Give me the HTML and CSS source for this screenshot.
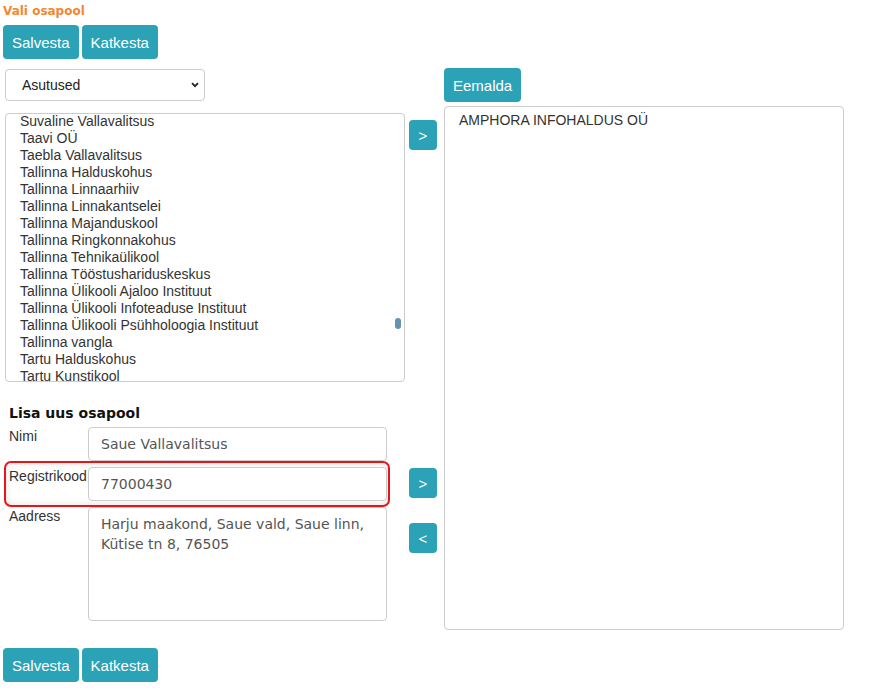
FILE: index.html
```html
<!DOCTYPE html>
<html lang="et">
<head>
<meta charset="utf-8">
<title>Vali osapool</title>
<link rel="stylesheet" href="styles.css">
</head>
<body>
<div class="page">
  <div class="title">Vali osapool</div>
  <div class="toolbar">
    <button class="btn">Salvesta</button>
    <button class="btn">Katkesta</button>
  </div>

  <div class="main">
    <div class="left">
      <div class="select">
        <span>Asutused</span>
        <svg class="chev" width="8" height="6" viewBox="0 0 8 6"><path d="M1 1.2 L4 4.2 L7 1.2" fill="none" stroke="#222" stroke-width="1.8"/></svg>
      </div>
      <div class="listbox">
        <div class="items">
          <div class="item">Suvaline Vallavalitsus</div>
          <div class="item">Taavi OÜ</div>
          <div class="item">Taebla Vallavalitsus</div>
          <div class="item">Tallinna Halduskohus</div>
          <div class="item">Tallinna Linnaarhiiv</div>
          <div class="item">Tallinna Linnakantselei</div>
          <div class="item">Tallinna Majanduskool</div>
          <div class="item">Tallinna Ringkonnakohus</div>
          <div class="item">Tallinna Tehnikaülikool</div>
          <div class="item">Tallinna Tööstushariduskeskus</div>
          <div class="item">Tallinna Ülikooli Ajaloo Instituut</div>
          <div class="item">Tallinna Ülikooli Infoteaduse Instituut</div>
          <div class="item">Tallinna Ülikooli Psühholoogia Instituut</div>
          <div class="item">Tallinna vangla</div>
          <div class="item">Tartu Halduskohus</div>
          <div class="item">Tartu Kunstikool</div>
        </div>
        <div class="thumb"></div>
      </div>

      <div class="subhead">Lisa uus osapool</div>
      <div class="form">
        <div class="row">
          <div class="label">Nimi</div>
          <div class="input">Saue Vallavalitsus</div>
        </div>
        <div class="row hl">
          <div class="highlight"></div>
          <div class="label">Registrikood</div>
          <div class="input">77000430</div>
        </div>
        <div class="row">
          <div class="label">Aadress</div>
          <div class="textarea">Harju maakond, Saue vald, Saue linn,<br>Kütise tn 8, 76505</div>
        </div>
      </div>
    </div>

    <div class="mid">
      <button class="btn sm b1">&gt;</button>
      <button class="btn sm b2">&gt;</button>
      <button class="btn sm b3">&lt;</button>
    </div>

    <div class="right">
      <button class="btn">Eemalda</button>
      <div class="box">
        <div class="item">AMPHORA INFOHALDUS OÜ</div>
      </div>
    </div>
  </div>

  <div class="toolbar bottom">
    <button class="btn">Salvesta</button>
    <button class="btn">Katkesta</button>
  </div>
</div>
</body>
</html>
```

FILE: styles.css
```css
html, body {
  margin: 0;
  padding: 0;
  background: #fff;
}
body {
  font-family: "Liberation Sans", Arial, sans-serif;
  font-size: 14px;
  color: #333;
}
.page {
  width: 871px;
}
.title {
  margin-top: 3px;
  padding-left: 3px;
  font-family: "DejaVu Sans", Verdana, sans-serif;
  font-weight: bold;
  font-size: 12px;
  line-height: 16px;
  color: #f5862e;
}
.toolbar {
  display: flex;
  gap: 3px;
  padding-left: 3px;
  margin-top: 6px;
}
.toolbar.bottom {
  margin-top: 18px;
}
.btn {
  display: inline-flex;
  align-items: center;
  justify-content: center;
  height: 34px;
  padding: 0 9px;
  margin: 0;
  border: 0;
  border-radius: 4px;
  background: #2ca2b6;
  color: #fff;
  font-family: "Liberation Sans", Arial, sans-serif;
  font-size: 15px;
  line-height: 17px;
}
.btn.sm {
  width: 28px;
  height: 30px;
  padding: 0;
  font-size: 15px;
}
.main {
  display: flex;
  align-items: flex-start;
  margin-top: 10px;
  padding-left: 5px;
}
.left {
  width: 400px;
  display: flex;
  flex-direction: column;
}
.select {
  box-sizing: border-box;
  width: 200px;
  height: 32px;
  border: 1px solid #ccc;
  border-radius: 4px;
  display: flex;
  align-items: center;
  justify-content: space-between;
  padding: 0 5px 0 16px;
  color: #222;
  line-height: 17px;
}
.chev {
  display: block;
}
.listbox {
  position: relative;
  box-sizing: border-box;
  margin-top: 12px;
  width: 400px;
  height: 269px;
  border: 1px solid #ccc;
  border-radius: 4px;
  overflow: hidden;
}
.items {
  margin-top: -1px;
}
.item {
  padding-left: 14px;
  line-height: 17px;
  height: 17px;
  white-space: nowrap;
  color: #333;
}
.thumb {
  position: absolute;
  left: 389px;
  top: 204px;
  width: 6px;
  height: 11px;
  border-radius: 3px;
  background: #6593ad;
}
.subhead {
  margin-top: 23px;
  padding-left: 4px;
  font-family: "DejaVu Sans", Verdana, sans-serif;
  font-weight: bold;
  font-size: 14px;
  line-height: 17px;
  color: #111;
}
.form {
  margin-top: 5px;
  display: flex;
  flex-direction: column;
  gap: 6px;
}
.row {
  display: flex;
  align-items: flex-start;
}
.row.hl {
  position: relative;
}
.highlight {
  position: absolute;
  left: -1px;
  top: -6px;
  width: 386px;
  height: 46px;
  box-sizing: border-box;
  border: 2px solid #e8141c;
  border-radius: 7px;
  box-shadow: inset 0 0 7px rgba(0, 0, 0, 0.13);
  pointer-events: none;
}
.label {
  width: 79px;
  padding-left: 4px;
  padding-top: 1px;
  line-height: 17px;
  color: #333;
  white-space: nowrap;
}
.input, .textarea {
  box-sizing: border-box;
  width: 299px;
  border: 1px solid #ccc;
  border-radius: 4px;
  padding: 0 12px;
  font-family: "DejaVu Sans", Verdana, sans-serif;
  font-size: 14px;
  color: #555;
  background: #fff;
  position: relative;
}
.input {
  height: 34px;
  display: flex;
  align-items: center;
}
.textarea {
  height: 114px;
  padding-top: 6px;
  line-height: 20px;
}
.mid {
  margin-left: 4px;
  width: 28px;
  display: flex;
  flex-direction: column;
}
.b1 { margin-top: 51px; }
.b2 { margin-top: 318px; }
.b3 { margin-top: 25px; }
.right {
  margin-left: 7px;
  margin-top: -1px;
  width: 400px;
  display: flex;
  flex-direction: column;
  align-items: flex-start;
}
.box {
  box-sizing: border-box;
  margin-top: 4px;
  width: 400px;
  height: 524px;
  border: 1px solid #ccc;
  border-radius: 4px;
  padding-top: 5px;
}
```
